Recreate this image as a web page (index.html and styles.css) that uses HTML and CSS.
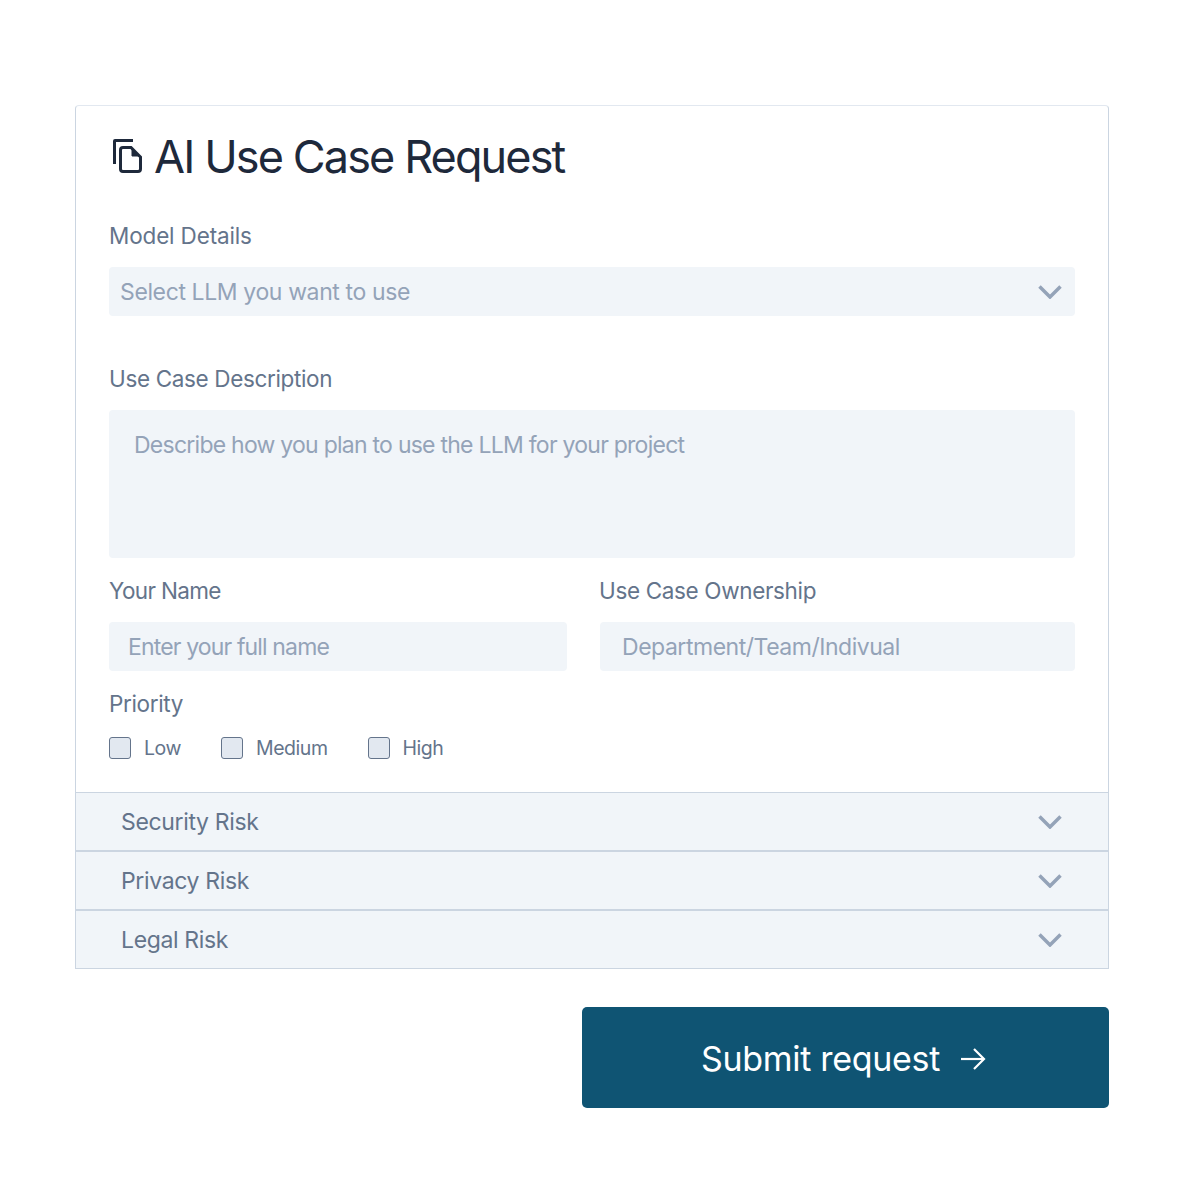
FILE: index.html
```html
<!DOCTYPE html>
<html lang="en">
<head>
    <meta charset="UTF-8">
    <title>AI Use Case Request</title>
    <link rel="stylesheet" href="styles.css">
</head>
<body>
    <section class="card">
        <div class="card-body">
            <h1 class="title">
                <svg class="title-icon" viewBox="0 0 31 36" width="31" height="36" fill="none" stroke="#1e293b" stroke-width="3">
                    <path d="M3.500 26V3Q3.500 2.500 4 2.500H22"/>
                    <path d="M9.500 12Q9.500 9.500 12 9.500H20L29.500 19V31Q29.500 33.500 27 33.500H12Q9.500 33.500 9.500 31Z"/>
                    <path d="M21 11.500L27.500 18H21Z" fill="#1e293b" stroke-width="1"/>
                </svg>
                AI Use Case Request
            </h1>

            <p class="label label-model">Model Details</p>
            <div class="select">
                <span>Select LLM you want to use</span>
                <svg class="chevron" viewBox="0 0 24 14" width="24" height="14"><path d="M1.500 1.500L12 12L22.500 1.500"/></svg>
            </div>

            <p class="label label-desc">Use Case Description</p>
            <div class="textarea">Describe how you plan to use the LLM for your project</div>

            <div class="row">
                <div class="col-name">
                    <p class="label label-name">Your Name</p>
                    <div class="input input-name">Enter your full name</div>
                </div>
                <div class="col-owner">
                    <p class="label">Use Case Ownership</p>
                    <div class="input input-owner">Department/Team/Indivual</div>
                </div>
            </div>

            <p class="label label-priority">Priority</p>
            <div class="checks">
                <label class="check"><span class="box"></span>Low</label>
                <label class="check"><span class="box"></span>Medium</label>
                <label class="check"><span class="box"></span>High</label>
            </div>
        </div>

        <div class="acc">
            <span>Security Risk</span>
            <svg class="chevron" viewBox="0 0 24 14" width="24" height="14"><path d="M1.500 1.500L12 12L22.500 1.500"/></svg>
        </div>
        <div class="acc">
            <span>Privacy Risk</span>
            <svg class="chevron" viewBox="0 0 24 14" width="24" height="14"><path d="M1.500 1.500L12 12L22.500 1.500"/></svg>
        </div>
        <div class="acc">
            <span>Legal Risk</span>
            <svg class="chevron" viewBox="0 0 24 14" width="24" height="14"><path d="M1.500 1.500L12 12L22.500 1.500"/></svg>
        </div>
    </section>

    <div class="actions">
        <button class="submit" type="button">
            Submit request
            <svg viewBox="0 0 26 24" width="26" height="24" fill="none" stroke="#fff" stroke-width="2.200"><path d="M1 12H24"/><path d="M14 2L24 12L14 22"/></svg>
        </button>
    </div>
</body>
</html>
```

FILE: styles.css
```css
*{
    margin: 0;
    padding: 0;
    box-sizing: border-box;
}

body{
    padding: 105px 75px 0 75px;
    background: #fff;
    font-family: "Inter", "Liberation Sans", sans-serif;
    color: #64748b;
}

.card{
    width: 1034px;
    height: 864px;
    border: 1px solid #cbd5e1;
    border-top-color: #e2e8f0;
    border-radius: 4px 4px 0 0;
}

.card-body{
    height: 686px;
    padding: 21px 33px 0 33px;
}

.title{
    display: flex;
    align-items: center;
    height: 58px;
    font-size: 45px;
    font-weight: 400;
    letter-spacing: -1.880px;
    color: #1e293b;
}

.title-icon{
    margin: 0 12px 0 2px;
}

.label{
    font-size: 22.500px;
    line-height: 28px;
    letter-spacing: -0.350px;
}

.label-model{
    margin-top: 37px;
    letter-spacing: -0.150px;
}

.label-name{
    letter-spacing: -0.650px;
}

.label-desc{
    margin-top: 49px;
}

.label-priority{
    margin-top: 19px;
}

.select,
.textarea,
.input{
    background: #f1f5f9;
    border-radius: 4px;
    color: #94a3b8;
    font-size: 23px;
}

.select{
    display: flex;
    justify-content: space-between;
    align-items: center;
    height: 49px;
    margin-top: 17px;
    padding: 0 13px 0 11px;
    letter-spacing: -0.380px;
}

.chevron{
    fill: none;
    stroke: #94a3b8;
    stroke-width: 3.500px;
}

.textarea{
    height: 148px;
    margin-top: 17px;
    padding: 20px 25px;
    line-height: 30px;
    letter-spacing: -0.750px;
}

.row{
    display: flex;
    gap: 32px;
    margin-top: 19px;
}

.col-name{
    width: 458px;
}

.col-owner{
    width: 476px;
}

.input{
    display: flex;
    align-items: center;
    height: 49px;
    margin-top: 17px;
    padding-top: 1px;
}

.input-name{
    padding-left: 19px;
    letter-spacing: -0.850px;
}

.input-owner{
    margin-left: 1px;
    padding-left: 22px;
    letter-spacing: -0.470px;
}

.checks{
    display: flex;
    gap: 40px;
    margin-top: 18px;
}

.check{
    display: flex;
    align-items: center;
    font-size: 19.500px;
    line-height: 24px;
    letter-spacing: -0.450px;
}

.box{
    width: 22px;
    height: 22px;
    margin-right: 13px;
    background: #e2e8f0;
    border: 1px solid #64748b;
    border-radius: 3px;
}

.acc{
    display: flex;
    justify-content: space-between;
    align-items: center;
    height: 59px;
    padding: 0 46px 0 45px;
    background: #f1f5f9;
    border-top: 2px solid #cbd5e1;
    font-size: 23px;
    letter-spacing: -0.350px;
}

.card-body + .acc{
    height: 58px;
    border-top-width: 1px;
}

.actions{
    display: flex;
    justify-content: flex-end;
    width: 1034px;
    margin-top: 38px;
}

.submit{
    display: flex;
    justify-content: center;
    align-items: center;
    gap: 20px;
    width: 527px;
    height: 101px;
    padding: 2px 4px 0 0;
    background: #0f5473;
    border: none;
    border-radius: 5px;
    color: #fff;
    font-family: inherit;
    font-size: 34px;
    letter-spacing: -0.300px;
}
```
